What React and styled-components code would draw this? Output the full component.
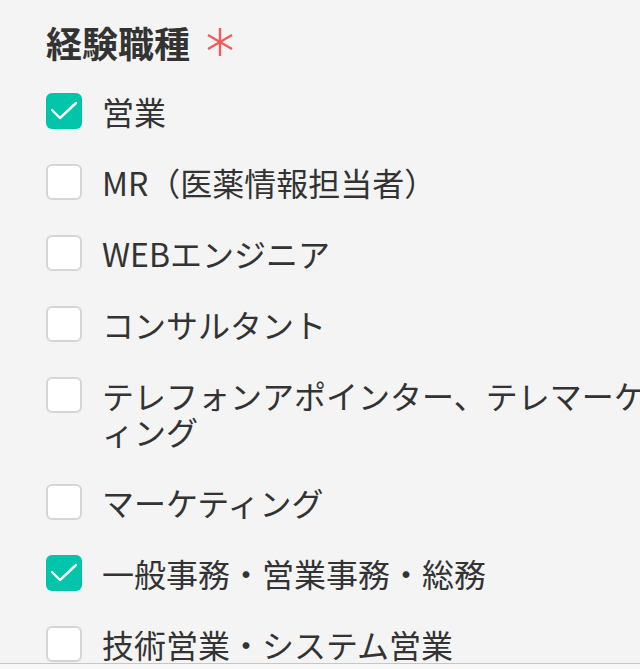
import React, { useState } from "react";
import styled, { createGlobalStyle } from "styled-components";

const GlobalStyle = createGlobalStyle`
  html, body {
    margin: 0;
    padding: 0;
    background: #f4f4f4;
    overflow: hidden;
  }
  body {
    font-family: "Noto Sans CJK JP", "Noto Sans", sans-serif;
    color: #333;
  }
`;

const jobs = [
  { label: "営業", checked: true },
  { label: "MR（医薬情報担当者）", checked: false },
  { label: "WEBエンジニア", checked: false },
  { label: "コンサルタント", checked: false },
  { label: "テレフォンアポインター、テレマーケティング", checked: false },
  { label: "マーケティング", checked: false },
  { label: "一般事務・営業事務・総務", checked: true },
  { label: "技術営業・システム営業", checked: false },
];

const Page = styled.div`
  width: 692px;
  box-sizing: border-box;
  padding: 24px 0 0 46px;
`;

const Heading = styled.h2`
  margin: 0;
  display: flex;
  align-items: center;
  gap: 17px;
  font-size: 36px;
  line-height: 36px;
  font-weight: 700;
  color: #333;
`;

const List = styled.ul`
  list-style: none;
  margin: 33px 0 0;
  padding: 0;
  display: flex;
  flex-direction: column;
  gap: 35px;
`;

const Row = styled.li`
  display: flex;
  align-items: flex-start;
  gap: 20px;
  cursor: pointer;
`;

const Box = styled.span`
  flex: none;
  width: 36px;
  height: 36px;
  box-sizing: border-box;
  border-radius: 6px;
  border: ${(p) => (p.$checked ? "none" : "2px solid #d5d5d5")};
  background: ${(p) => (p.$checked ? "#00c5aa" : "#fff")};
  display: flex;
  align-items: center;
  justify-content: center;
`;

const Label = styled.span`
  flex: 1;
  font-size: 32px;
  line-height: 36px;
  color: #333;
  line-break: loose;
`;

const Footer = styled.div`
  position: fixed;
  left: 0;
  right: 0;
  bottom: 0;
  height: 5px;
  border-top: 1px solid #c6c6c6;
  background: #f8f8f8;
`;

const Asterisk = () => (
  <svg width="26" height="28" viewBox="0 0 26 28">
    <g stroke="#f25b5b" strokeWidth="2.4" fill="none">
      <line x1="13" y1="0" x2="13" y2="28" />
      <line x1="1" y1="7" x2="25" y2="21" />
      <line x1="1" y1="21" x2="25" y2="7" />
    </g>
  </svg>
);

const Check = () => (
  <svg width="36" height="36" viewBox="0 0 36 36">
    <polyline
      points="6,17 14,25 30,10"
      stroke="#fff"
      strokeWidth="2.4"
      fill="none"
      strokeLinecap="round"
      strokeLinejoin="round"
    />
  </svg>
);

export default function App() {
  const [items, setItems] = useState(jobs);

  const toggle = (i) =>
    setItems((prev) =>
      prev.map((it, j) => (j === i ? { ...it, checked: !it.checked } : it))
    );

  return (
    <>
      <GlobalStyle />
      <Page>
        <Heading>
          経験職種
          <Asterisk />
        </Heading>
        <List>
          {items.map((it, i) => (
            <Row key={it.label} onClick={() => toggle(i)}>
              <Box $checked={it.checked}>{it.checked && <Check />}</Box>
              <Label>{it.label}</Label>
            </Row>
          ))}
        </List>
      </Page>
      <Footer />
    </>
  );
}
